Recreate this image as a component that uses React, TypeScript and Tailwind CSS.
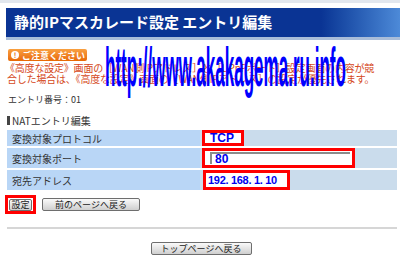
const jp = "font-['MS_UI_Gothic','Noto_Sans_CJK_JP',sans-serif]";

const rows = [
	{ label: "変換対象プロトコル", kind: "proto" },
	{ label: "変換対象ポート", kind: "port" },
	{ label: "宛先アドレス", kind: "addr" },
];

function Btn({ children, className = "" }: { children: React.ReactNode; className?: string }) {
	return (
		<div
			className={`flex items-center justify-center rounded-[2px] border border-[#6e6e6e] bg-gradient-to-b from-[#fafafa] to-[#cfcfcf] text-[9px] leading-none text-[#222] ${className}`}
		>
			{children}
		</div>
	);
}

const valText = "font-['Liberation_Sans',sans-serif] font-bold text-[#0000ee] whitespace-nowrap";

function Value({ kind }: { kind: string }) {
	if (kind === "proto") {
		return (
			<div className={`ml-[2px] flex h-full w-[42px] items-center border-[3px] border-[#ff0000] bg-white pl-[5px] text-[12px] ${valText}`}>
				TCP
			</div>
		);
	}
	if (kind === "port") {
		return (
			<div className="ml-[2px] flex h-full w-[153px] items-center border-[3px] border-[#ff0000] bg-white pl-[5px] pr-[2px]">
				<div className={`flex h-[12px] w-full items-center border-l-2 border-t-2 border-[#8c8c8c] pl-[3px] text-[12px] ${valText}`}>
					80
				</div>
			</div>
		);
	}
	return (
		<div className={`ml-[3px] flex h-full w-[87px] items-center border-[3px] border-[#ff0000] bg-white pl-[2px] text-[11px] tracking-[-0.3px] ${valText}`}>
			192. 168. 1. 10
		</div>
	);
}

export default function App() {
	return (
		<div className={`relative h-[262px] w-[400px] overflow-hidden bg-white ${jp}`}>
			<div className="h-[3px] bg-[#e2e7ee]" />
			<div className="ml-[6px] mt-[5px] flex h-[29px] items-center bg-gradient-to-r from-[#0a3494] from-80% to-[#4d8ad8] pl-[8px] text-[15px] font-bold text-white">
				静的IPマスカレード設定 エントリ編集
			</div>
			<div className="ml-[6px] h-[3px] bg-[#a9bdd9]" />

			<div className="pl-[7px] pr-[3px]">
				<div className="ml-[1px] mt-[9px] flex h-[12px] w-[79px] items-center gap-[3px] whitespace-nowrap rounded-[2px] bg-gradient-to-b from-[#f9a040] to-[#e86800] pl-[3px] text-[9px] font-bold leading-none text-white">
					<span className="flex h-[8px] w-[8px] shrink-0 items-center justify-center rounded-full bg-white text-[7px] font-bold text-[#e86800]">
						!
					</span>
					ご注意ください
				</div>
				<div className="mt-[1px] whitespace-nowrap text-[10px] leading-[11px] tracking-[-0.2px] text-[#d5481a]">
					<div className="-ml-[2px]">《高度な設定》画面の［WAN側IPアドレス］と［UPnPポート］設定画面の内容が競</div>
					<div>合した場合は、《高度な設定》画面の［WAN側IPアドレス］の設定が優先されます。</div>
				</div>

				<div className="ml-[1px] mt-[10px] text-[9px] leading-[12px] text-[#333]">エントリ番号：01</div>

				<div className="mt-[8px] flex h-[12px] items-center gap-[2px] text-[10px] text-[#333]">
					<span className="h-[9px] w-[3px] bg-[#444]" />
					NATエントリ編集
				</div>

				<div className="mt-[4px] flex flex-col gap-[2px]">
					{rows.map((r, i) => (
						<div key={r.label} className={`flex ${i === 0 ? "h-[16px]" : "h-[20px]"}`}>
							<div className="flex w-[193px] items-center bg-[#b9d6f6] pl-[5px] text-[10px] text-[#333]">
								{r.label}
							</div>
							<div className="flex flex-1 items-stretch bg-[#cadcec]">
								<Value kind={r.kind} />
							</div>
						</div>
					))}
				</div>

				<div className="mt-[5px] flex items-center gap-[6px]">
					<div className="-ml-[2px] flex h-[19px] w-[31px] items-center justify-center border-[3px] border-[#ff0000]">
						<Btn className="h-[12px] w-[23px]">設定</Btn>
					</div>
					<Btn className="h-[13px] w-[98px]">前のページへ戻る</Btn>
				</div>

				<div className="mt-[13px] h-[2px] bg-[#d6d6d6]" />

				<div className="mt-[13px] flex justify-center pr-[2px]">
					<Btn className="h-[13px] w-[101px]">トップページへ戻る</Btn>
				</div>
			</div>

			<div className="absolute left-[105px] top-[40px] origin-left scale-x-[0.31] whitespace-nowrap font-['Liberation_Sans',sans-serif] text-[55px] font-bold leading-[55px] text-[#0000ff]">
				http://www.akakagema.ru.info
			</div>
		</div>
	);
}
